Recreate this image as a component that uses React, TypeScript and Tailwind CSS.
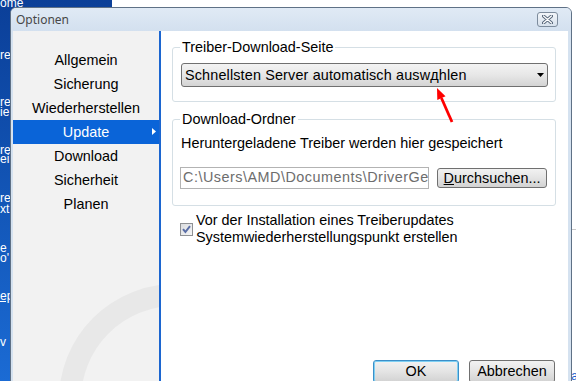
import type { ReactNode } from "react";

const NAV = ["Allgemein", "Sicherung", "Wiederherstellen", "Update", "Download", "Sicherheit", "Planen"];

// clipped text of the window behind the dialog: [text, margin class]
const BACK_LINES: [string, string][] = [
  ["ome", "-mt-[2px]"],
  ["re", "mt-[41px]"],
  ["re", "mt-[36px]"],
  ["ie", "-mt-px"],
  ["re", "mt-[27px]"],
  ["ei", "-mt-[2px]"],
  ["re", "mt-[28px]"],
  ["xt", "mt-0"],
  ["e", "mt-[28px]"],
  ["o'", "-mt-px"],
  ["ep", "mt-[27px] underline"],
  ["v", "mt-[35px]"],
];

function Backdrop() {
  return (
    <>
      <div className="absolute left-0 top-0 flex h-full w-[112px] flex-col bg-linear-to-b from-[#0b3f98] to-[#1b6bd4] text-[12px] leading-[11px] text-white">
        {BACK_LINES.map(([t, m], i) => (
          <div key={i} className={`h-[11px] whitespace-nowrap ${m}`}>
            {t}
          </div>
        ))}
      </div>
      <div className="absolute right-0 top-[229px] h-px w-[5px] bg-[#c9c9c9]" />
      <div className="absolute bottom-[-4px] right-[-2px] text-[12px] text-[#1a5fd0]">a</div>
    </>
  );
}

function TitleBar() {
  return (
    <div className="flex h-[23px] items-start justify-between rounded-t-[5px] bg-linear-to-b from-[#e0eaf5] to-[#d3e0ef] pl-[5px] pr-[13px]">
      <span className="mt-[4px] font-['Noto_Sans',sans-serif] text-[12px] leading-[16px] text-[#474747]">Optionen</span>
      <button className="mt-[4px] flex h-[15px] w-[21px] items-center justify-center rounded-[3px] border border-[#7d8c9d] bg-linear-to-b from-[#f3f6fa] to-[#d7e1ec]">
        <svg width="11" height="9" viewBox="0 0 11 9">
          <path d="M1.5 1 L9.5 8 M9.5 1 L1.5 8" stroke="#56667a" strokeWidth="3.2" strokeLinecap="round" />
          <path d="M1.5 1 L9.5 8 M9.5 1 L1.5 8" stroke="#ffffff" strokeWidth="1.3" strokeLinecap="round" />
        </svg>
      </button>
    </div>
  );
}

function Nav() {
  return (
    <div className="relative w-[148px] overflow-hidden border-r-2 border-[#1c66d0] bg-[#f2f2f2] pt-[17px]">
      <svg className="absolute inset-0 h-full w-full" aria-hidden>
        <circle cx="162" cy="369" r="105" fill="none" stroke="#e8e8e8" strokeWidth="22" />
      </svg>
      {NAV.map((n) => (
        <div
          key={n}
          className={`relative h-[24px] text-center leading-[24px] ${
            n === "Update" ? "bg-[#0a64d8] text-white" : "text-black"
          }`}
        >
          {n}
          {n === "Update" && (
            <svg className="absolute right-[3px] top-[8px]" width="4" height="7" viewBox="0 0 4 7">
              <polygon points="0,0 4,3.5 0,7" fill="#ffffff" />
            </svg>
          )}
        </div>
      ))}
    </div>
  );
}

function Group({ title, children, className = "" }: { title: string; children: ReactNode; className?: string }) {
  return (
    <fieldset className={`rounded-[3px] border border-[#d5dfe5] px-[7px] pt-[7px] ${className}`}>
      <legend className="px-[2px] leading-[17px]">{title}</legend>
      {children}
    </fieldset>
  );
}

function WinButton({ children, focused = false, className = "" }: { children: ReactNode; focused?: boolean; className?: string }) {
  return (
    <button
      className={`flex items-center justify-center rounded-[3px] border bg-linear-to-b from-[#f2f2f2] via-[#e4e4e4] to-[#d2d2d2] leading-[17px] ${
        focused ? "border-[#3c8fc8] shadow-[inset_0_0_0_1px_#7fd0f3]" : "border-[#707070]"
      } ${className}`}
    >
      {children}
    </button>
  );
}

function Panel() {
  return (
    <div className="flex flex-1 flex-col bg-white pl-[11px] pr-[12px] pt-[8px]">
      <Group title="Treiber-Download-Seite" className="pb-[14px]">
        <div className="ml-px flex h-[24px] w-[367px] items-center justify-between rounded-[3px] border border-[#707070] bg-linear-to-b from-[#f3f3f3] via-[#e7e7e7] to-[#d4d4d4] pl-[3px] pr-[3px]">
          <span className="whitespace-nowrap leading-[17px] tracking-[0.15px]">Schnellsten Server automatisch auswдhlen</span>
          <svg width="7" height="4" viewBox="0 0 7 4">
            <polygon points="0,0 7,0 3.5,4" fill="#000000" />
          </svg>
        </div>
      </Group>

      <Group title="Download-Ordner" className="mt-[9px] pb-[16px]">
        <div className="pl-px leading-[17px]">Heruntergeladene Treiber werden hier gespeichert</div>
        <div className="mt-[15px] flex items-center gap-[8px]">
          <div className="flex h-[22px] w-[249px] items-center overflow-hidden whitespace-nowrap border border-[#b3b3b3] pl-[2px] tracking-[0.5px] text-[#6d6d6d]">
            {"C:\\Users\\AMD\\Documents\\DriverGenius"}
          </div>
          <WinButton className="h-[20px] w-[110px]">
            <span className="underline">D</span>urchsuchen...
          </WinButton>
        </div>
      </Group>

      <div className="ml-[8px] mt-[6px] flex items-center gap-[3px]">
        <svg width="13" height="13" viewBox="0 0 13 13">
          <defs>
            <linearGradient id="cb" x1="0" y1="0" x2="1" y2="1">
              <stop offset="0" stopColor="#d9dbde" />
              <stop offset="1" stopColor="#f7f7f7" />
            </linearGradient>
          </defs>
          <rect x="0.5" y="0.5" width="12" height="12" fill="url(#cb)" stroke="#8f9194" />
          <path d="M3 6.2 L5.4 9 L10 3.2" stroke="#5a6ea6" strokeWidth="2" fill="none" />
        </svg>
        <div className="leading-[17px]">
          <div>Vor der Installation eines Treiberupdates</div>
          <div>Systemwiederherstellungspunkt erstellen</div>
        </div>
      </div>

      <div className="mr-px mt-[114px] flex justify-end gap-[10px]">
        <WinButton focused className="h-[23px] w-[86px]">
          OK
        </WinButton>
        <WinButton className="h-[23px] w-[86px]">Abbrechen</WinButton>
      </div>
    </div>
  );
}

function RedArrow() {
  return (
    <svg className="absolute left-0 top-0" width="576" height="381" aria-hidden>
      <line x1="452" y1="122" x2="441.4" y2="98" stroke="#ff0000" strokeWidth="2.8" />
      <polygon points="437,88 445.5,96.3 437.3,99.9" fill="#ff0000" />
    </svg>
  );
}

export default function App() {
  return (
    <div className="relative h-[381px] w-[576px] overflow-hidden bg-white font-['Liberation_Sans',Arial,sans-serif] text-[14.4px] text-black">
      <Backdrop />
      <div className="absolute left-[10px] top-[7px] flex h-[400px] w-[562px] flex-col rounded-t-[6px] border border-[#5f7186] bg-[#d5e2f0]">
        <TitleBar />
        <div className="flex flex-1 pl-[2px] pr-[3px]">
          <Nav />
          <Panel />
        </div>
      </div>
      <RedArrow />
    </div>
  );
}
